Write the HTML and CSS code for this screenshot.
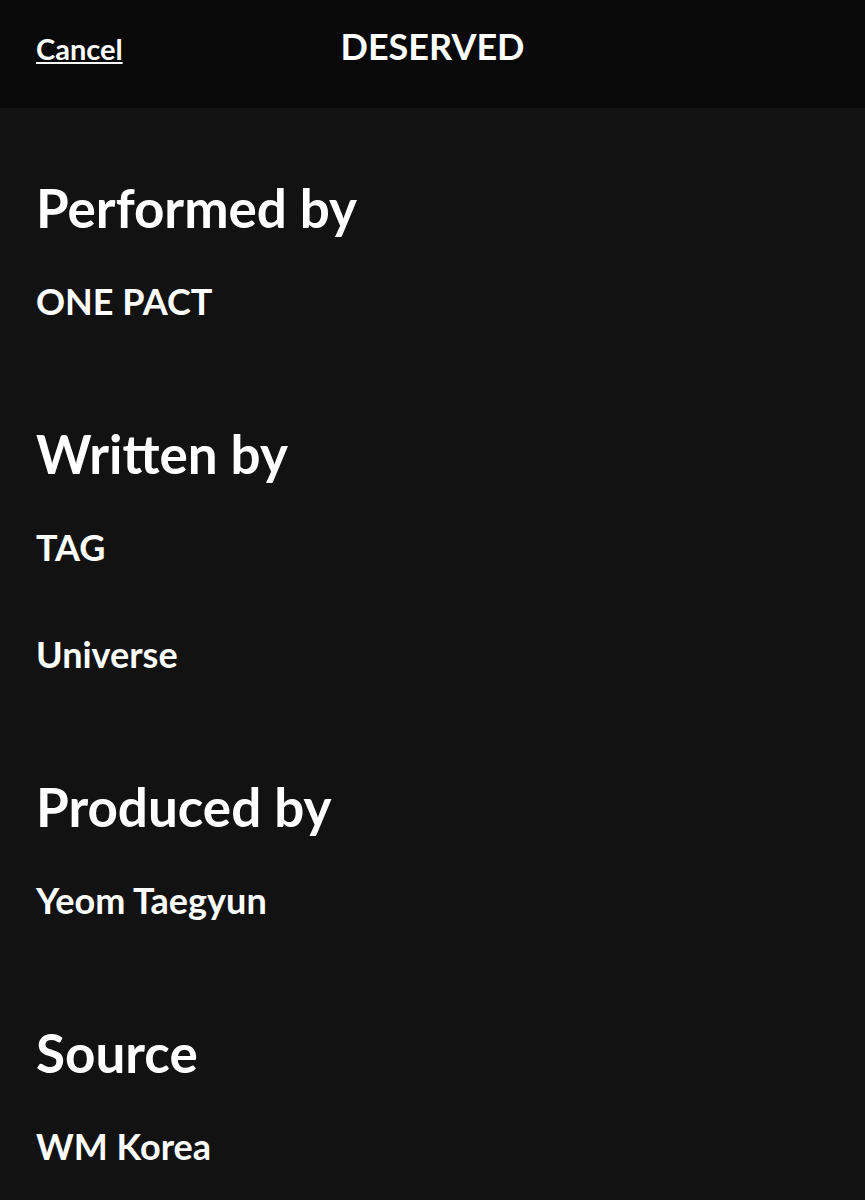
FILE: index.html
```html
<!DOCTYPE html>
<html lang="en">
<head>
  <meta charset="UTF-8">
  <meta name="viewport" content="width=device-width, initial-scale=1.0">
  <title>DESERVED</title>
  <link rel="stylesheet" href="styles.css">
</head>
<body>

  <header class="topbar">
    <button type="button" class="cancel">Cancel</button>
    <h1 class="title">DESERVED</h1>
  </header>

  <main class="credits">
    <section class="credit">
      <h2>Performed by</h2>
      <ul>
        <li>ONE PACT</li>
      </ul>
    </section>

    <section class="credit">
      <h2>Written by</h2>
      <ul>
        <li>TAG</li>
        <li>Universe</li>
      </ul>
    </section>

    <section class="credit">
      <h2>Produced by</h2>
      <ul>
        <li>Yeom Taegyun</li>
      </ul>
    </section>

    <section class="credit">
      <h2>Source</h2>
      <ul>
        <li>WM Korea</li>
      </ul>
    </section>
  </main>

</body>
</html>
```
FILE: styles.css
```css
* {
  box-sizing: border-box;
  margin: 0;
  padding: 0;
}

body {
  background-color: #121212;
  color: #fff;
  font-family: Lato, "Open Sans", sans-serif;
}

.topbar {
  display: grid;
  grid-template-columns: 1fr auto 1fr;
  align-items: baseline;
  min-height: 108px;
  padding: 22px 36px;
  background-color: #090909;
}

.cancel {
  justify-self: start;
  border: none;
  background: none;
  color: inherit;
  font-family: inherit;
  font-size: 29px;
  font-weight: 700;
  text-decoration: underline;
  text-decoration-thickness: 2px;
  text-underline-offset: 2px;
  cursor: pointer;
}

.title {
  font-size: 36px;
  font-weight: 700;
  line-height: 48px;
}

.credits {
  display: flex;
  flex-direction: column;
  gap: 81px;
  padding: 68px 36px 24px;
}

.credit h2 {
  margin-bottom: 21px;
  font-size: 53px;
  font-weight: 700;
  line-height: 64px;
}

.credit ul {
  display: flex;
  flex-direction: column;
  gap: 27px;
  list-style: none;
}

.credit li {
  font-size: 36px;
  font-weight: 700;
  line-height: 80px;
}
```
